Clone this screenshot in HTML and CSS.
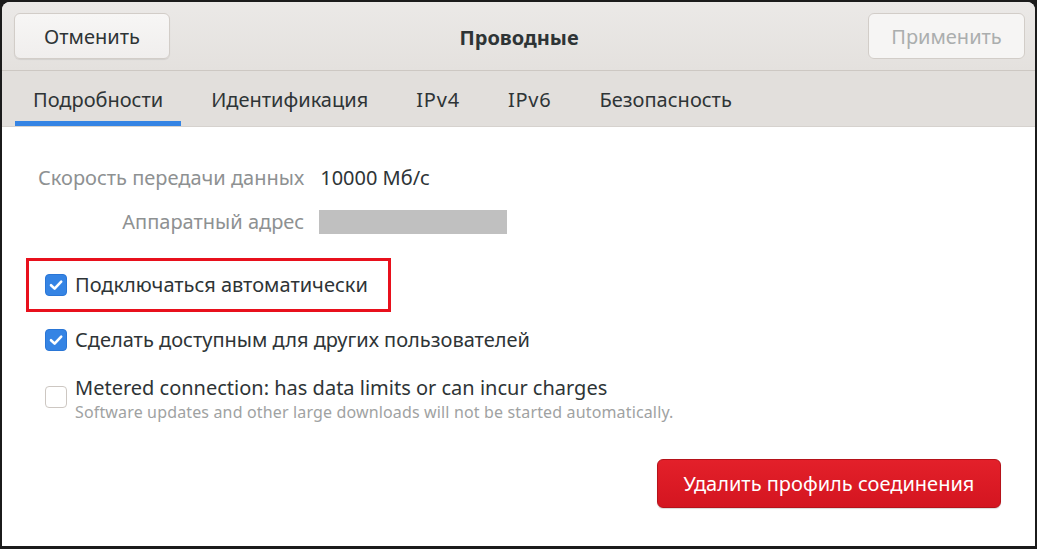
FILE: index.html
```html
<!DOCTYPE html>
<html lang="ru">
<head>
<meta charset="utf-8">
<title>Проводные</title>
<link rel="stylesheet" href="styles.css">
</head>
<body>
<div class="frame">
  <div class="window">
    <header class="headerbar">
      <button class="btn btn-cancel">Отменить</button>
      <div class="title">Проводные</div>
      <button class="btn btn-apply" disabled>Применить</button>
    </header>
    <nav class="tabs">
      <div class="tab active">Подробности</div>
      <div class="tab">Идентификация</div>
      <div class="tab tab-latin">IPv4</div>
      <div class="tab tab-latin">IPv6</div>
      <div class="tab">Безопасность</div>
    </nav>
    <main class="content">
      <div class="info">
        <div class="label">Скорость передачи данных</div>
        <div class="value">10000 Мб/с</div>
        <div class="label">Аппаратный адрес</div>
        <div class="value"><span class="redacted"></span></div>
      </div>
      <div class="checks">
        <div class="highlight">
          <label class="check">
            <span class="box checked"><svg viewBox="0 0 22 22" width="22" height="22"><path d="M6 11.2 L9.6 14.6 L16.2 7.6" fill="none" stroke="#fff" stroke-width="2.6" stroke-linecap="round" stroke-linejoin="round"/></svg></span>
            <span class="check-text">Подключаться автоматически</span>
          </label>
        </div>
        <label class="check check-second">
          <span class="box checked"><svg viewBox="0 0 22 22" width="22" height="22"><path d="M6 11.2 L9.6 14.6 L16.2 7.6" fill="none" stroke="#fff" stroke-width="2.6" stroke-linecap="round" stroke-linejoin="round"/></svg></span>
          <span class="check-text">Сделать доступным для других пользователей</span>
        </label>
        <label class="check check-metered">
          <span class="box"></span>
          <span class="check-stack">
            <span class="check-text">Metered connection: has data limits or can incur charges</span>
            <span class="check-sub">Software updates and other large downloads will not be started automatically.</span>
          </span>
        </label>
      </div>
      <div class="actions">
        <button class="btn-delete">Удалить профиль соединения</button>
      </div>
    </main>
  </div>
</div>
</body>
</html>
```

FILE: styles.css
```css
html, body {
  margin: 0;
  padding: 0;
  background: #1b1b1b;
}
body {
  font-family: "Noto Sans", "Open Sans", sans-serif;
  color: #2e3436;
}
.frame {
  width: 1037px;
  height: 549px;
  box-sizing: border-box;
  padding: 2px 2px 3px 2px;
  background: #1b1b1b;
}
.window {
  height: 100%;
  background: #ffffff;
  border-radius: 8px 8px 0 0;
  overflow: hidden;
  display: flex;
  flex-direction: column;
}
.headerbar {
  height: 69px;
  box-sizing: border-box;
  background: linear-gradient(#ebe9e7, #e4e1de);
  border-bottom: 1px solid #cdc8c3;
  display: flex;
  align-items: center;
  justify-content: space-between;
  padding: 0 10px 0 12px;
}
.btn {
  height: 46px;
  border: 1px solid #d2cdc8;
  border-radius: 6px;
  background: linear-gradient(#f7f6f5, #f0eeed);
  box-shadow: 0 1px 1px rgba(0,0,0,0.08);
  font-family: inherit;
  font-size: 20px;
  color: #2e3436;
  padding: 0;
}
.btn-cancel { width: 156px; }
.btn-apply {
  width: 157px;
  color: #abaeae;
  background: #f6f5f4;
  box-shadow: none;
}
.title {
  font-weight: bold;
  font-size: 20px;
  color: #2e3436;
  padding-top: 2px;
}
.tabs {
  height: 56px;
  box-sizing: border-box;
  background: #e2dfdc;
  border-bottom: 1px solid #d6d2ce;
  display: flex;
  gap: 12px;
  padding-left: 13px;
}
.tab {
  padding: 6px 18px 0;
  font-size: 20px;
  color: #2e3436;
  display: flex;
  align-items: center;
  box-sizing: border-box;
  border-bottom: 5px solid transparent;
}
.tab-latin {
  letter-spacing: 0.8px;
}
.tab.active {
  border-bottom-color: #3584e4;
}
.content {
  flex: 1;
  display: flex;
  flex-direction: column;
  padding: 0 34px 0 24px;
}
.info {
  display: grid;
  grid-template-columns: auto auto;
  justify-content: start;
  column-gap: 16px;
  row-gap: 16px;
  margin-top: 37px;
  margin-left: 12px;
  align-items: center;
}
.label {
  text-align: right;
  color: #8e9192;
  font-size: 20px;
  line-height: 28px;
}
.value {
  font-size: 20px;
  line-height: 28px;
  color: #2e3436;
  display: flex;
  align-items: center;
}
.redacted {
  display: block;
  width: 188px;
  height: 24px;
  margin-left: -1px;
  background: #c0c0c0;
}
.checks {
  display: flex;
  flex-direction: column;
  margin-top: 22px;
}
.highlight {
  width: 365px;
  height: 54px;
  box-sizing: border-box;
  border: 3px solid #e8101c;
  display: flex;
  align-items: center;
  padding-left: 16px;
}
.check {
  display: flex;
  align-items: center;
  gap: 8px;
  font-size: 20px;
  color: #2e3436;
}
.check-second {
  margin-top: 15px;
  padding-left: 19px;
}
.check-metered {
  margin-top: 22px;
  padding-left: 19px;
  align-items: flex-start;
}
.box {
  width: 22px;
  height: 22px;
  box-sizing: border-box;
  border-radius: 4px;
  flex: none;
  border: 1px solid #cdc7c2;
  background: #fff;
  display: block;
}
.check-metered .box {
  margin-top: 11px;
}
.box.checked {
  background: #3584e4;
  border-color: #2a76d6;
}
.box svg { display: block; margin: -1px; }
.check-stack {
  display: flex;
  flex-direction: column;
}
.check-text {
  line-height: 26px;
}
.check-sub {
  font-size: 16px;
  color: #a0a2a2;
  line-height: 22px;
  letter-spacing: 0.15px;
}
.actions {
  display: flex;
  justify-content: flex-end;
  margin-top: 36px;
}
.btn-delete {
  width: 344px;
  height: 49px;
  border-radius: 6px;
  border: 1px solid #b5121a;
  background: linear-gradient(#e3202a, #d41520);
  color: #ffffff;
  font-family: inherit;
  font-size: 20px;
  box-shadow: 0 1px 1px rgba(0,0,0,0.15);
}
```
